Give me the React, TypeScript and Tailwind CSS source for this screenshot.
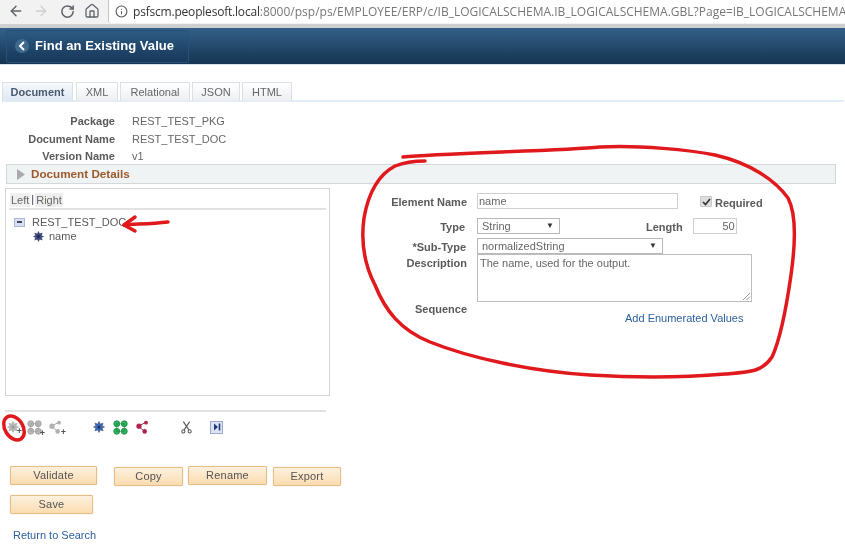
import React from "react";
import { ArrowLeft, ArrowRight, RotateCw, Home, Info } from "lucide-react";

function Circle4({ c, d }: { c: string; d: string }) {
  return (
    <svg width="15" height="15" viewBox="0 0 16 16">
      {[[4, 4], [12, 4], [4, 12], [12, 12]].map(([x, y]) => (
        <circle key={x * 100 + y} cx={x} cy={y} r="3.2" fill={c} stroke={d} strokeWidth="0.8" />
      ))}
      <path d="M4 4H12M4 12H12M4 4V12M12 4V12" stroke={d} strokeWidth="0.6" fill="none" />
    </svg>
  );
}
function Nodes({ c, d, w = 15 }: { c: string; d: string; w?: number }) {
  return (
    <svg width={w} height="14" viewBox="0 0 16 16">
      <path d="M3.5 7L11 3M3.5 7L10 13" stroke={d} strokeWidth="1" fill="none" />
      <circle cx="4" cy="7" r="3" fill={c} />
      <circle cx="12" cy="3" r="2.2" fill={c} />
      <circle cx="10.5" cy="13" r="2.6" fill={c} />
    </svg>
  );
}
function Gear({ c, d, size = 12 }: { c: string; d: string; size?: number }) {
  return (
    <svg width={size} height={size} viewBox="0 0 14 14">
      <path d="M7 0.5L8.4 3.6L11.8 2.5L10.7 5.7L13.5 7L10.7 8.3L11.8 11.5L8.4 10.4L7 13.5L5.6 10.4L2.2 11.5L3.3 8.3L0.5 7L3.3 5.7L2.2 2.5L5.6 3.6Z" fill={c} stroke={d} strokeWidth="0.5" />
      <circle cx="7" cy="7" r="1.8" fill={d} />
    </svg>
  );
}
function Plus() {
  return <span className="absolute right-[-3px] bottom-[-3px] text-[9px] leading-[9px] font-bold text-[#555]">+</span>;
}

function Btn({ label, w, className = "" }: { label: string; w: string; className?: string }) {
  return (
    <div className={`${w} ${className} h-[19px] flex items-center justify-center bg-gradient-to-b from-[#fdf1de] to-[#fbdcb0] border border-[#e8bd85] rounded-[1px] shadow-[0_0_1px_#d8b488] text-[11px] tracking-[0.2px] text-[#555]`}>
      {label}
    </div>
  );
}
function Tab({ label, w, active }: { label: string; w: string; active?: boolean }) {
  return (
    <div className={`${w} h-[19px] flex items-center justify-center border border-[#dbe0e6] border-b-0 text-[11px] ${active ? "bg-gradient-to-b from-[#f6f8fb] to-[#dde8f3] text-[#4b5a70] font-bold" : "bg-gradient-to-b from-white to-[#eceef1] text-[#666]"}`}>
      {label}
    </div>
  );
}
function Label({ children, className = "" }: { children: React.ReactNode; className?: string }) {
  return <div className={`w-[117px] shrink-0 text-right font-bold text-[11px] leading-[14px] text-[#5a5a5a] ${className}`}>{children}</div>;
}
function Meta({ label, value, className = "" }: { label: string; value: string; className?: string }) {
  return (
    <div className={`flex items-center h-[17px] ${className}`}>
      <div className="w-[115px] text-right font-bold text-[11px] text-[#5a5a5a]">{label}</div>
      <div className="ml-[17px] text-[11px] text-[#666]">{value}</div>
    </div>
  );
}
const tri = <span className="text-[8px] leading-none text-[#333]">▼</span>;

export default function App() {
  return (
    <div className="relative w-[845px] h-[549px] overflow-hidden bg-white blur-[0.3px] font-['Liberation_Sans',Arial,sans-serif]">
      {/* browser bar */}
      <div className="h-[28px] bg-[#f2f2f2] flex items-start border-b-[4px] border-[#cfcfcf]">
        <div className="flex items-center h-[22px] pl-[8px] w-[108px] shrink-0 text-[#5f6368]">
          <ArrowLeft size={16} strokeWidth={2.2} />
          <ArrowRight size={16} strokeWidth={2} className="ml-[9px] text-[#d0d0d0]" />
          <RotateCw size={15} strokeWidth={2.4} className="ml-[11px]" />
          <Home size={16} strokeWidth={1.9} className="ml-[9px]" />
        </div>
        <div className="flex-1 h-[23px] bg-white border-l border-[#c6c6c6] rounded-bl-[2px] flex items-center pl-[6px] overflow-hidden whitespace-nowrap font-['Open_Sans',sans-serif] text-[12px] text-[#777]">
          <Info size={13} strokeWidth={2} className="shrink-0 text-[#555] mr-[5px]" />
          <span className="text-[#333] tracking-[-0.2px]">psfscm.peoplesoft.local</span>
          <span>:8000/psp/ps/EMPLOYEE/ERP/c/IB_LOGICALSCHEMA.IB_LOGICALSCHEMA.GBL?Page=IB_LOGICALSCHEMA</span>
        </div>
      </div>

      {/* page header */}
      <div className="h-[37px] bg-gradient-to-b from-[#336189] to-[#153451] border-b border-[#d5e2ee] flex items-center pl-[6px]">
        <div className="w-[183px] h-[33px] rounded-[2px] bg-gradient-to-b from-[#2d5a82] to-[#17385a] border border-[#2a5278] flex items-center pl-[8px]">
          <div className="w-[14px] h-[14px] rounded-full bg-[#3f6a90] flex items-center justify-center">
            <svg width="8" height="10" viewBox="0 0 8 10"><path d="M6 1L2 5L6 9" stroke="white" strokeWidth="2" fill="none" /></svg>
          </div>
          <span className="ml-[6px] text-white font-bold text-[13px] tracking-[0.05px]">Find an Existing Value</span>
        </div>
      </div>

      {/* tabs */}
      <div className="mt-[17px] ml-[2px] mr-[1px] flex gap-[2px] border-b-[2px] border-[#e3edf6] h-[20px]">
        <Tab label="Document" w="w-[71px] mr-[1px]" active />
        <Tab label="XML" w="w-[42px]" />
        <Tab label="Relational" w="w-[70px]" />
        <Tab label="JSON" w="w-[48px]" />
        <Tab label="HTML" w="w-[50px]" />
      </div>

      {/* document meta */}
      <div className="mt-[11px]">
        <Meta label="Package" value="REST_TEST_PKG" />
        <Meta label="Document Name" value="REST_TEST_DOC" className="mt-[1px]" />
        <Meta label="Version Name" value="v1" />
      </div>

      {/* collapsible */}
      <div className="-mt-[1px] ml-[6px] w-[830px] h-[20px] bg-[#f0f3f4] border border-[#d5d8da] flex items-center pl-[10px]">
        <svg width="8" height="11" viewBox="0 0 8 11"><path d="M0 0L8 5.5L0 11Z" fill="#aaa" /></svg>
        <span className="ml-[6px] font-bold text-[11.7px] text-[#9c5a2c]">Document Details</span>
      </div>

      <div className="flex items-start mt-[4px]">
        {/* left column */}
        <div className="w-[350px] shrink-0 pl-[5px]">
          <div className="w-[325px] h-[208px] border border-[#d4d4d4] pt-[2px] px-[3px]">
            <div className="h-[19px] border-b-[2px] border-[#e2e2e2] flex items-center pl-[1px] text-[11px] text-[#666]">
              <span className="bg-[#efefef] px-px leading-[14px]">Left</span>
              <span className="mx-[1px] text-[#446]">|</span>
              <span className="bg-[#efefef] px-px leading-[14px]">Right</span>
            </div>
            <div className="mt-[5px] flex items-center h-[14px] pl-[5px]">
              <div className="w-[11px] h-[9px] border border-[#aab8d8] bg-[#d8e0f4] flex items-center justify-center">
                <div className="w-[5px] h-[1.5px] bg-[#445]" />
              </div>
              <span className="ml-[7px] text-[11px] text-[#5a5a5a]">REST_TEST_DOC</span>
            </div>
            <div className="flex items-center h-[14px] pl-[24px]">
              <Gear c="#3a4a80" d="#222a50" size={11} />
              <span className="ml-[5px] text-[11px] text-[#5a5a5a]">name</span>
            </div>
          </div>

          {/* tool strip */}
          <div className="mt-[14px] w-[321px] border-t-[2px] border-[#e2e2e2] h-[41px] flex items-center pb-[9px] pl-[2px]">
            <div className="relative"><Gear c="#b8b8b8" d="#999" /><Plus /></div>
            <div className="relative ml-[8px]"><Circle4 c="#b8b8b8" d="#999" /><Plus /></div>
            <div className="relative ml-[6px]"><Nodes c="#b0b0b0" d="#999" /><Plus /></div>
            <div className="ml-[30px]"><Gear c="#3e6cb8" d="#20305c" /></div>
            <div className="ml-[8px]"><Circle4 c="#2eb35e" d="#14813c" /></div>
            <div className="ml-[7px]"><Nodes c="#b0244c" d="#702040" /></div>
            <svg width="11" height="15" viewBox="0 0 14 16" className="ml-[31px]">
              <path d="M3 0.5L10 11M11 0.5L4 11" stroke="#555" strokeWidth="1.4" fill="none" />
              <circle cx="3" cy="13" r="2" fill="none" stroke="#555" strokeWidth="1.3" />
              <circle cx="11" cy="13" r="2" fill="none" stroke="#555" strokeWidth="1.3" />
            </svg>
            <div className="ml-[18px] w-[13px] h-[13px] border border-[#9aa8cc] bg-[#dbe3f5] flex items-center justify-center gap-[1px]">
              <svg width="8" height="8" viewBox="0 0 8 8"><path d="M1 0.5L5 4L1 7.5Z" fill="#223a78" /><rect x="5.7" y="0.5" width="1.6" height="7" fill="#223a78" /></svg>
            </div>
          </div>

          {/* buttons */}
          <div className="mt-[15px] -ml-[5px] pl-[10px] flex items-start">
            <Btn label="Validate" w="w-[87px]" />
            <Btn label="Copy" w="w-[69px]" className="ml-[17px] mt-[1px]" />
            <Btn label="Rename" w="w-[79px]" className="ml-[5px]" />
            <Btn label="Export" w="w-[68px]" className="ml-[6px] mt-[1px]" />
          </div>
          <div className="-ml-[5px] pl-[10px] mt-[9px]">
            <Btn label="Save" w="w-[83px]" />
          </div>
          <div className="-ml-[5px] pl-[13px] mt-[13px] text-[11px] text-[#2c5f9e] whitespace-nowrap">Return to Search</div>
        </div>

        {/* right form */}
        <div className="flex-1 pt-[5px]">
          <div className="flex items-start h-[25px]">
            <Label className="mt-[2px]">Element Name</Label>
            <div className="ml-[10px] w-[201px] h-[16px] border border-[#cfcfcf] flex items-center pl-[1px] text-[11px] text-[#666]">name</div>
            <div className="ml-[22px] mt-[3px] w-[12px] h-[11px] bg-[#dedede] rounded-[1px] border border-[#c8c8c8] flex items-center justify-center">
              <svg width="9" height="8" viewBox="0 0 9 8"><path d="M1 4L3.5 6.5L8 1" stroke="#333" strokeWidth="1.7" fill="none" /></svg>
            </div>
            <div className="ml-[3px] mt-[3px] font-bold text-[11px] leading-[15px] text-[#5a5a5a]">Required</div>
          </div>
          <div className="flex items-start h-[20px]">
            <Label className="mt-[2px] pr-[2px]">Type</Label>
            <div className="ml-[10px] w-[83px] h-[16px] border border-[#b8b8b8] flex items-center justify-between pl-[4px] pr-[5px] text-[11px] text-[#666]">String{tri}</div>
            <div className="ml-[86px] mt-[2px] font-bold text-[11px] leading-[14px] text-[#5a5a5a]">Length</div>
            <div className="ml-[10px] w-[44px] h-[16px] border border-[#cfcfcf] flex items-center justify-end pr-px text-[11px] text-[#666]">50</div>
          </div>
          <div className="flex items-start h-[16px]">
            <Label className="mt-[2px] pr-px">*Sub-Type</Label>
            <div className="ml-[10px] w-[186px] h-[16px] border border-[#b8b8b8] flex items-center justify-between pl-[4px] pr-[5px] text-[11px] text-[#666]">normalizedString{tri}</div>
          </div>
          <div className="flex items-start h-[48px]">
            <Label className="mt-[2px]">Description</Label>
            <div className="relative ml-[10px] w-[275px] h-[48px] border border-[#bdbdbd] pl-[2px] text-[11px] leading-[16px] text-[#666]">
              The name, used for the output.
              <svg width="9" height="9" viewBox="0 0 9 9" className="absolute right-0 bottom-0"><path d="M8 1L1 8M8 4.5L4.5 8" stroke="#999" strokeWidth="1" /></svg>
            </div>
          </div>
          <div className="h-[24px]">
            <Label>Sequence</Label>
            <div className="ml-[275px] -mt-[5px] text-[11px] leading-[14px] text-[#2c5f9e] whitespace-nowrap">Add Enumerated Values</div>
          </div>
        </div>
      </div>

      {/* hand-drawn annotations */}
      <svg width="845" height="549" viewBox="0 0 845 549" className="absolute left-0 top-0 pointer-events-none">
        <g fill="none" stroke="#e0191c" strokeLinecap="round" strokeLinejoin="round" strokeWidth="3.5">
          <path d="M403 157C440 153 560 151 600 147C640 145 690 150 715 155C750 163 775 180 788 198C796 213 796 240 791 275C786 310 780 340 772 357C762 372 750 372 725 374C690 377 640 378 590 375C530 371 470 358 430 342C400 330 385 310 375 285C363 262 361 240 364 218C368 195 378 175 395 166C405 162 415 161 425 161" />
          <path d="M124 225C135 224 150 224 168 222" />
          <path d="M135 217L124 225L135 231" />
          <ellipse cx="14" cy="428" rx="9" ry="13" transform="rotate(-32 14 428)" />
        </g>
      </svg>
    </div>
  );
}
